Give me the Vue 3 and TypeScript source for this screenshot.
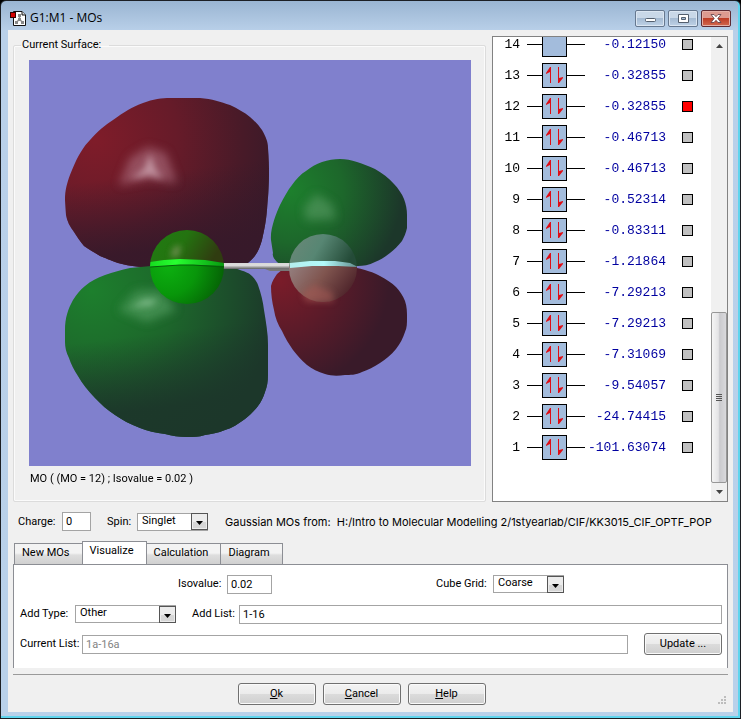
<script setup lang="ts">
import { ref } from 'vue'

interface Orbital {
  id: number
  energy: string
  occupied: boolean
  marked: boolean
}

const energies: [number, string][] = [
  [14, '-0.12150'],
  [13, '-0.32855'],
  [12, '-0.32855'],
  [11, '-0.46713'],
  [10, '-0.46713'],
  [9, '-0.52314'],
  [8, '-0.83311'],
  [7, '-1.21864'],
  [6, '-7.29213'],
  [5, '-7.29213'],
  [4, '-7.31069'],
  [3, '-9.54057'],
  [2, '-24.74415'],
  [1, '-101.63074'],
]

const orbitals = ref<Orbital[]>(
  energies.map(([id, energy]) => ({ id, energy, occupied: id <= 13, marked: id === 12 })),
)

const tabs = ['New MOs', 'Visualize', 'Calculation', 'Diagram']
const activeTab = ref('Visualize')

const charge = ref('0')
const spin = ref('Singlet')
const isovalue = ref('0.02')
const cubeGrid = ref('Coarse')
const addType = ref('Other')
const addList = ref('1-16')
const currentList = ref('1a-16a')
</script>

<template>
  <div class="window">
    <header class="titlebar">
      <svg class="app-icon" width="17" height="17" viewBox="0 0 17 17" aria-hidden="true">
        <path d="M3.5 1.5H12L15.5 5V15.5H3.5Z" fill="#fff" stroke="#111" />
        <path d="M12 1.5V5H15.5" fill="#ddd" stroke="#111" />
        <path d="M9.500 5V9L6 13M9.500 9L13 13" fill="none" stroke="#999" stroke-width="1.500" />
        <rect x="8" y="4" width="3" height="3" fill="#888" />
        <rect x="8" y="8" width="3" height="3" fill="#888" />
        <rect x="5" y="11" width="3" height="3" fill="#888" />
        <rect x="11" y="11" width="3" height="3" fill="#888" />
        <rect x="0.500" y="2.500" width="5" height="5" fill="#d40000" stroke="#300" />
      </svg>
      <h1>G1:M1 - MOs</h1>
      <div class="caption-buttons">
        <button type="button" aria-label="Minimize">
          <svg width="11" height="11" viewBox="0 0 11 11"><rect x="0.500" y="5.500" width="10" height="3" rx="1" fill="#fff" stroke="#535f6e" /></svg>
        </button>
        <button type="button" aria-label="Maximize">
          <svg width="11" height="11" viewBox="0 0 11 11"><path d="M0.500 1.500H10.500V9.500H0.500Z M3.500 4.500V6.500H7.500V4.500Z" fill="#fff" fill-rule="evenodd" stroke="#535f6e" /></svg>
        </button>
        <button type="button" class="close" aria-label="Close">
          <svg width="12" height="11" viewBox="0 0 12 11"><path d="M1 1.500H4L6 3.700L8 1.500H11L7.800 5.500L11 9.500H8L6 7.300L4 9.500H1L4.200 5.500Z" fill="#fff" stroke="#5c3a44" stroke-width="0.800" /></svg>
        </button>
      </div>
    </header>

    <main class="client">
      <section class="upper">
        <fieldset class="surface">
          <legend>Current Surface:</legend>
          <svg class="scene" viewBox="29 60 442 406" role="img" aria-label="Molecular orbital surface">
            <defs>
              <radialGradient id="redA" gradientUnits="userSpaceOnUse" cx="95" cy="140" r="185">
                <stop offset="0" stop-color="#7f1c29" />
                <stop offset="0.450" stop-color="#661b29" />
                <stop offset="0.800" stop-color="#481a28" />
                <stop offset="1" stop-color="#391a29" />
              </radialGradient>
              <linearGradient id="shadeA" x1="0" y1="0" x2="0.150" y2="1">
                <stop offset="0.500" stop-color="#37192a" stop-opacity="0" />
                <stop offset="0.950" stop-color="#37192a" stop-opacity="0.950" />
              </linearGradient>
              <radialGradient id="greenA" gradientUnits="userSpaceOnUse" cx="92" cy="290" r="185">
                <stop offset="0" stop-color="#1d7f2d" />
                <stop offset="0.450" stop-color="#1d662b" />
                <stop offset="0.750" stop-color="#1c4d2b" />
                <stop offset="1" stop-color="#1c372a" />
              </radialGradient>
              <linearGradient id="shadeB" x1="0" y1="0" x2="0.150" y2="1">
                <stop offset="0.450" stop-color="#1c372a" stop-opacity="0" />
                <stop offset="0.880" stop-color="#1c372a" stop-opacity="0.950" />
              </linearGradient>
              <radialGradient id="greenB" gradientUnits="userSpaceOnUse" cx="290" cy="190" r="118">
                <stop offset="0" stop-color="#1d802d" />
                <stop offset="0.450" stop-color="#1d672b" />
                <stop offset="0.950" stop-color="#1c372a" />
              </radialGradient>
              <radialGradient id="redB" gradientUnits="userSpaceOnUse" cx="280" cy="280" r="115">
                <stop offset="0" stop-color="#7a1c29" />
                <stop offset="0.450" stop-color="#5c1b29" />
                <stop offset="0.950" stop-color="#391a29" />
              </radialGradient>
              <linearGradient id="ballTop" x1="0" y1="0" x2="1" y2="0.300">
                <stop offset="0" stop-color="#207c12" />
                <stop offset="0.500" stop-color="#247310" />
                <stop offset="1" stop-color="#303c10" />
              </linearGradient>
              <radialGradient id="ballLow" gradientUnits="userSpaceOnUse" cx="168" cy="266" r="58">
                <stop offset="0" stop-color="#0cb010" />
                <stop offset="0.500" stop-color="#08960a" />
                <stop offset="1" stop-color="#056005" />
              </radialGradient>
              <linearGradient id="paleTop" x1="0" y1="0" x2="1" y2="0.300">
                <stop offset="0" stop-color="#6d8878" />
                <stop offset="0.500" stop-color="#578673" />
                <stop offset="1" stop-color="#244b38" />
              </linearGradient>
              <linearGradient id="paleLow" x1="0" y1="0" x2="1" y2="0.400">
                <stop offset="0" stop-color="#958080" />
                <stop offset="0.500" stop-color="#80554f" />
                <stop offset="1" stop-color="#4c2229" />
              </linearGradient>
              <linearGradient id="bond" x1="0" y1="0" x2="0" y2="1">
                <stop offset="0" stop-color="#d8d8d8" />
                <stop offset="0.400" stop-color="#dedede" />
                <stop offset="1" stop-color="#606060" />
              </linearGradient>
              <linearGradient id="ringGreen" x1="0" y1="0" x2="1" y2="0">
                <stop offset="0" stop-color="#16dc20" />
                <stop offset="0.350" stop-color="#28ff30" />
                <stop offset="1" stop-color="#079a10" />
              </linearGradient>
              <linearGradient id="ringPale" x1="0" y1="0" x2="1" y2="0">
                <stop offset="0" stop-color="#b5eeee" />
                <stop offset="0.500" stop-color="#b2fafa" />
                <stop offset="1" stop-color="#608b8b" />
              </linearGradient>
              <filter id="soft" x="-50%" y="-50%" width="200%" height="200%"><feGaussianBlur stdDeviation="5" /></filter>
              <filter id="softer" x="-50%" y="-50%" width="200%" height="200%"><feGaussianBlur stdDeviation="3" /></filter>
              <clipPath id="ballClip"><circle cx="187" cy="267" r="37" /></clipPath>
              <clipPath id="paleClip"><circle cx="323" cy="268" r="34" /></clipPath>
              <path id="lobeRed" d="M65 200C65 190 67 182 72 170C78 155 84 146 90 140C98 131 105 125 113 120C124 112 132 107 143 103C153 99 162 98 170 98H200C212 99 221 102 230 105C238 109 244 112 250 117C256 122 259 126 262 130C266 137 268 142 268 148C269 158 269 166 269 175C269 188 268 198 267 210C266 222 264 231 262 240C260 247 258 252 254 257C249 263 245 265 240 267H148C134 267 126 265 118 263C110 260 105 258 100 256C94 252 88 249 84 246C80 241 77 237 74 232C70 227 67 221 66 215Z" />
              <path id="lobeGreen" d="M65 330C65 318 68 309 73 300C77 294 80 290 85 286C91 281 97 278 105 275C113 272 121 270 130 268L151 266H218C230 267 235 268 240 270C246 272 249 273 252 276C255 279 257 282 258 285C261 293 263 302 264 310C266 322 268 334 268 345V375C268 381 267 387 265 392C263 398 261 402 258 406C254 411 250 415 245 419C238 424 232 428 225 430C218 433 211 434 205 435C199 437 193 437 187 437C179 437 172 436 165 434C156 433 147 431 140 428C130 424 122 420 115 415C107 410 101 404 95 398C88 391 82 383 78 376C74 370 71 364 69 358C66 352 65 347 65 342Z" />
            </defs>

            <use href="#lobeRed" fill="url(#redA)" />
            <use href="#lobeRed" fill="url(#shadeA)" />
            <use href="#lobeGreen" fill="url(#greenA)" />
            <use href="#lobeGreen" fill="url(#shadeB)" />
            <path d="M271 240C270 229 276 214 280 205C284 197 288 190 292 185C296 179 301 174 306 171C311 167 316 164 322 162C328 160 334 159 340 159C346 159 351 160 357 162C363 164 369 166 375 169C382 173 389 178 394 184C398 188 402 194 404 199C406 204 407 210 407 215V228C406 233 404 237 402 241C398 246 394 250 390 253C385 257 380 260 375 262C369 265 363 266 358 266H287C282 265 279 264 277 262C274 259 272 256 273 253Z" fill="url(#greenB)" />
            <path d="M271 286C272 281 275 277 277 274L283 269L290 267H350C366 269 374 273 380 276C386 279 392 283 396 287C400 291 403 296 405 301C407 307 407 312 407 318C407 323 407 328 405 332C403 338 400 344 396 349C391 355 386 359 380 363C374 367 368 370 362 372C356 375 350 375 345 375C338 376 331 376 325 374C318 372 312 369 307 365C301 360 297 355 293 350C289 344 285 338 282 331C278 325 275 317 274 310C272 302 271 294 271 286Z" fill="url(#redB)" />

            <g filter="url(#soft)">
              <path d="M119 185L130 158L148 147L166 153L177 183L149 179Z" fill="#b47a8a" opacity="0.550" />
              <path d="M119 310L136 291L160 290L176 310L147 322Z" fill="#5ea76c" opacity="0.550" />
              <path d="M304 208L316 194L332 204L336 219L306 220Z" fill="#66a671" opacity="0.500" />
            </g>
            <g filter="url(#softer)">
              <path d="M131 179L144 169L150 154L156 170L163 179L149 175Z" fill="#d0aab6" opacity="0.700" />
              <path d="M131 307L145 299L158 300L151 306Z" fill="#9bd0a5" opacity="0.600" />
            </g>

            <rect x="223" y="263" width="68" height="6" fill="url(#bond)" />
            <path d="M265 269H291V271H270Z" fill="#777" />

            <g clip-path="url(#ballClip)">
              <rect x="150" y="230" width="74" height="37" fill="url(#ballTop)" />
              <rect x="150" y="265" width="74" height="39" fill="url(#ballLow)" />
              <path d="M170 256L175 246L181 246L178 257Z" fill="#819460" opacity="0.800" filter="url(#softer)" />
              <path d="M150 262L164 260L180 259L205 260L224 263V266L205 265L180 265L150 267Z" fill="url(#ringGreen)" />
              <path d="M150 267L180 265H193L224 267" fill="none" stroke="#075e0b" stroke-width="1" />
            </g>
            <g clip-path="url(#paleClip)">
              <rect x="289" y="233" width="70" height="36" fill="url(#paleTop)" />
              <rect x="289" y="266" width="70" height="38" fill="url(#paleLow)" />
              <path d="M290 263L310 261H335L350 263L358 267L338 266H312L290 268Z" fill="url(#ringPale)" />
            </g>
            <path d="M302 293L314 285L332 292L334 302L306 302Z" fill="#a85c57" opacity="0.550" filter="url(#softer)" />
          </svg>
          <p class="scene-caption">MO ( (MO = 12) ; Isovalue = 0.02 )</p>
        </fieldset>

        <div class="levels">
          <ul>
            <li v-for="mo in orbitals" :key="mo.id">
              <label :for="`mo-${mo.id}`">{{ mo.id }}</label>
              <svg width="58" height="25" viewBox="0 0 58 25" aria-hidden="true">
                <path d="M0 12.500H58" stroke="#000" />
                <rect x="15.500" y="0.500" width="24" height="24" fill="#a3bcdc" stroke="#000" />
                <g v-if="mo.occupied" fill="#e00c14">
                  <path d="M23 4H24V20H23V9L19 11V10Z" />
                  <path d="M31 4H32V15L36 14V15L32 20H31Z" />
                </g>
              </svg>
              <span class="energy">{{ mo.energy }}</span>
              <input :id="`mo-${mo.id}`" v-model="mo.marked" type="checkbox" />
            </li>
          </ul>
          <div class="scrollbar">
            <button type="button" aria-label="Scroll up">
              <svg width="7" height="4" viewBox="0 0 7 4"><path d="M0 4L3.500 0L7 4Z" fill="#444" /></svg>
            </button>
            <div class="track">
              <div class="thumb"><i></i><i></i><i></i><i></i></div>
            </div>
            <button type="button" aria-label="Scroll down">
              <svg width="7" height="4" viewBox="0 0 7 4"><path d="M0 0H7L3.500 4Z" fill="#444" /></svg>
            </button>
          </div>
        </div>
      </section>

      <section class="state">
        <label for="charge" class="charge-label">Charge:</label>
        <input id="charge" v-model="charge" class="tiny" type="text" />
        <label for="spin" class="next spin-label">Spin:</label>
        <span class="combo">
          <select id="spin" v-model="spin">
            <option>Singlet</option>
            <option>Triplet</option>
          </select>
          <svg width="17" height="17" viewBox="0 0 17 17" aria-hidden="true"><rect x="0.500" y="0.500" width="16" height="16" fill="#ececec" stroke="#555" /><path d="M2 9H15V15H2Z" fill="#d6d6d6" /><path d="M5 8H12L8.500 12Z" /></svg>
        </span>
        <p class="source">Gaussian MOs from:&nbsp; H:/Intro to Molecular Modelling 2/1styearlab/CIF/KK3015_CIF_OPTF_POP</p>
      </section>

      <nav class="tabs" role="tablist">
        <button
          v-for="tab in tabs"
          :key="tab"
          type="button"
          role="tab"
          :aria-selected="tab === activeTab"
          :class="{ active: tab === activeTab }"
          @click="activeTab = tab"
        >{{ tab }}</button>
      </nav>

      <section class="pane">
        <div class="row grid-row">
          <label for="isovalue" class="isovalue-label">Isovalue:</label>
          <input id="isovalue" v-model="isovalue" class="short" type="text" />
          <label for="cube" class="cube-label">Cube Grid:</label>
          <span class="combo">
            <select id="cube" v-model="cubeGrid">
              <option>Coarse</option>
              <option>Medium</option>
              <option>Fine</option>
            </select>
            <svg width="17" height="17" viewBox="0 0 17 17" aria-hidden="true"><rect x="0.500" y="0.500" width="16" height="16" fill="#ececec" stroke="#555" /><path d="M2 9H15V15H2Z" fill="#d6d6d6" /><path d="M5 8H12L8.500 12Z" /></svg>
          </span>
        </div>
        <div class="row">
          <label for="type" class="type-label">Add Type:</label>
          <span class="combo wide">
            <select id="type" v-model="addType">
              <option>Other</option>
              <option>All</option>
            </select>
            <svg width="17" height="17" viewBox="0 0 17 17" aria-hidden="true"><rect x="0.500" y="0.500" width="16" height="16" fill="#ececec" stroke="#555" /><path d="M2 9H15V15H2Z" fill="#d6d6d6" /><path d="M5 8H12L8.500 12Z" /></svg>
          </span>
          <label for="list" class="next list-label">Add List:</label>
          <input id="list" v-model="addList" class="fill" type="text" />
        </div>
        <div class="row">
          <label for="current" class="current-label">Current List:</label>
          <input id="current" v-model="currentList" class="fill" type="text" disabled />
          <button type="button" class="push update">Update ...</button>
        </div>
      </section>

      <footer class="actions">
        <button type="button" class="push"><u>O</u>k</button>
        <button type="button" class="push"><u>C</u>ancel</button>
        <button type="button" class="push"><u>H</u>elp</button>
        <svg class="grip" width="10" height="10" viewBox="0 0 10 10" aria-hidden="true">
          <path d="M7 1h2v2H7zM4 4h2v2H4zM7 4h2v2H7zM1 7h2v2H1zM4 7h2v2H4zM7 7h2v2H7z" fill="#bdbdbd" />
        </svg>
      </footer>
    </main>
  </div>
</template>

<style>
body {
  margin: 0;
  background: #000;
}
</style>

<style scoped>
* {
  box-sizing: border-box;
}

.window {
  display: flex;
  flex-direction: column;
  height: 100vh;
  min-height: 560px;
  padding: 0 6px 6px;
  border: 1px solid #1c1f24;
  border-radius: 6px 6px 0 0;
  background: linear-gradient(#9ab5d2, #b9d0e9 30px, #b9d1ea);
  box-shadow: inset -1px -1px 0 1px #5fd5ee;
  font: 11px/14px Roboto, 'Liberation Sans', Arial, sans-serif;
  color: #000;
}

button,
input,
select {
  margin: 0;
  font: inherit;
  color: inherit;
}

.titlebar {
  display: flex;
  align-items: center;
  height: 29px;
  padding: 5px 3px 0 3px;
}

.titlebar h1 {
  flex: 1;
  margin: 0 0 0 3px;
  font: 12px/16px 'Open Sans', 'Noto Sans', sans-serif;
}

.caption-buttons {
  display: flex;
  gap: 3px;
}

.caption-buttons button {
  display: grid;
  place-items: center;
  width: 30px;
  height: 17px;
  padding: 0;
  border: 1px solid #66788f;
  border-radius: 2px;
  background: linear-gradient(#c9d8e8 45%, #a5bbd3 50%, #bfd2e6);
  box-shadow: inset 0 0 0 1px #dbe6f2;
}

.caption-buttons .close {
  border-color: #5d2a33;
  background: linear-gradient(#dd9a90 45%, #be3d27 50%, #d2694f);
  box-shadow: inset 0 0 0 1px #e4b0a8;
}

.client {
  display: flex;
  flex: 1;
  flex-direction: column;
  min-height: 0;
  margin: 0 1px;
  padding: 6px 5px 5px;
  background: #f0f0f0;
}

.upper {
  display: flex;
  flex: 1;
  gap: 6px;
  min-height: 0;
}

.surface {
  display: flex;
  flex: 1;
  flex-direction: column;
  min-width: 0;
  margin: 2px 0 0;
  padding: 8px 14px 15px 15px;
  border: 1px solid #dcdcdc;
  border-radius: 2px;
  box-shadow: inset 0 0 0 1px #fbfbfb;
}

.surface legend {
  margin-left: -8px;
  padding: 0 8px 0 1px;
}

.scene {
  display: block;
  flex: 1;
  width: 100%;
  min-height: 0;
  background: #8080cd;
}

.scene-caption {
  margin: 6px 0 0 1px;
}

.levels {
  display: flex;
  width: 236px;
  border: 1px solid #828282;
  background: #fff;
}

.levels ul {
  display: flex;
  flex: 1;
  flex-direction: column;
  justify-content: flex-end;
  margin: 0;
  padding: 0 0 38px;
  overflow: hidden;
  list-style: none;
}

.levels li {
  display: grid;
  flex: none;
  grid-template-columns: 27px 65px 81px 27px;
  align-items: center;
  height: 31px;
  font: 13px/16px 'Liberation Mono', 'Courier New', monospace;
}

.levels li label {
  text-align: right;
}

.levels li svg {
  margin-left: 7px;
}

.levels li .energy {
  justify-self: end;
  color: #0000a0;
}

.levels li input {
  width: 11px;
  height: 11px;
  margin: 0 0 0 16px;
  appearance: none;
  border: 1px solid #000;
  background: #c0c0c0;
}

.levels li input:checked {
  background: #f00;
}

.scrollbar {
  display: flex;
  flex-direction: column;
  width: 16px;
  background: #f0f0f0;
}

.scrollbar button {
  display: grid;
  place-items: center;
  height: 18px;
  padding: 0;
  border: 0;
  background: none;
}

.track {
  display: flex;
  flex: 1;
  flex-direction: column;
  justify-content: flex-end;
}

.thumb {
  display: flex;
  flex-direction: column;
  gap: 1px;
  align-items: center;
  justify-content: center;
  height: 40%;
  border: 1px solid #979797;
  border-radius: 2px;
  background: linear-gradient(90deg, #f5f5f5, #e4e4e6 45%, #cacace 55%, #d9d9dc);
}

.thumb i {
  width: 6px;
  height: 1px;
  background: #555;
}

.state {
  display: flex;
  gap: 6px;
  align-items: center;
  height: 19px;
  margin: 10px 0 0;
  padding-left: 5px;
  white-space: nowrap;
}

.state label,
.row label {
  flex: none;
  white-space: nowrap;
}

.charge-label {
  width: 38px;
}

.spin-label {
  width: 24px;
}

.isovalue-label {
  width: 43px;
}

.type-label {
  width: 49px;
}

.list-label {
  width: 41px;
}

.current-label {
  width: 56px;
}

input[type='text'] {
  min-width: 0;
  height: 19px;
  padding: 0 3px;
  border: 1px solid #a4a4a4;
  border-radius: 0;
  background: #fff;
}

input[type='text']:disabled {
  color: #838383;
}

input.tiny {
  flex: none;
  width: 29px;
}

.short {
  width: 45px;
}

.next {
  margin-left: 10px;
}

.combo {
  display: grid;
  flex: none;
  width: 71px;
  height: 18px;
}

.combo.wide {
  width: 101px;
}

.combo select {
  grid-area: 1 / 1;
  padding: 0 18px 2px 4px;
  appearance: none;
  border: 1px solid #a4a4a4;
  border-radius: 0;
  background: #fff;
}

.combo svg {
  grid-area: 1 / 1;
  align-self: center;
  justify-self: end;
  pointer-events: none;
}

.source {
  min-width: 0;
  margin: 0 0 0 11px;
  font: 11px/16px Inter, 'Noto Sans', sans-serif;
}

.tabs {
  display: flex;
  align-items: flex-end;
  height: 24px;
  margin: 10px 0 -1px 1px;
}

.tabs button {
  height: 22px;
  padding: 0 12px 2px 7px;
  border: 1px solid #8c8e94;
  background: linear-gradient(#f3f3f3 45%, #dedede 55%, #d0d0d0);
}

.tabs button + button {
  margin-left: -1px;
}

.tabs .active {
  height: 24px;
  padding-bottom: 4px;
  border-bottom-color: #fff;
  background: #fff;
}

.pane {
  display: grid;
  row-gap: 10px;
  padding: 9px 5px 14px 6px;
  border: solid #8c8e94;
  border-width: 1px 1px 0;
  background: #fff;
}

.row {
  display: flex;
  gap: 6px;
  align-items: center;
  height: 20px;
}

.grid-row {
  padding-left: 158px;
}

.cube-label {
  width: 51px;
  margin-left: 158px;
}

.fill {
  flex: 1;
}

.push {
  width: 78px;
  height: 22px;
  padding: 0;
  border: 1px solid #707070;
  border-radius: 3px;
  background: linear-gradient(#f3f3f3, #ebebeb 49%, #dbdbdb 51%, #cfcfcf);
  box-shadow: inset 0 0 0 1px #fafafa;
}

.update {
  margin-left: 10px;
}

.actions {
  display: flex;
  gap: 7px;
  justify-content: center;
  position: relative;
  margin-top: 6px;
  padding: 8px 18px 2px 0;
  border-top: 1px solid #9a9a9a;
}

.grip {
  position: absolute;
  right: 1px;
  bottom: 2px;
}
</style>
